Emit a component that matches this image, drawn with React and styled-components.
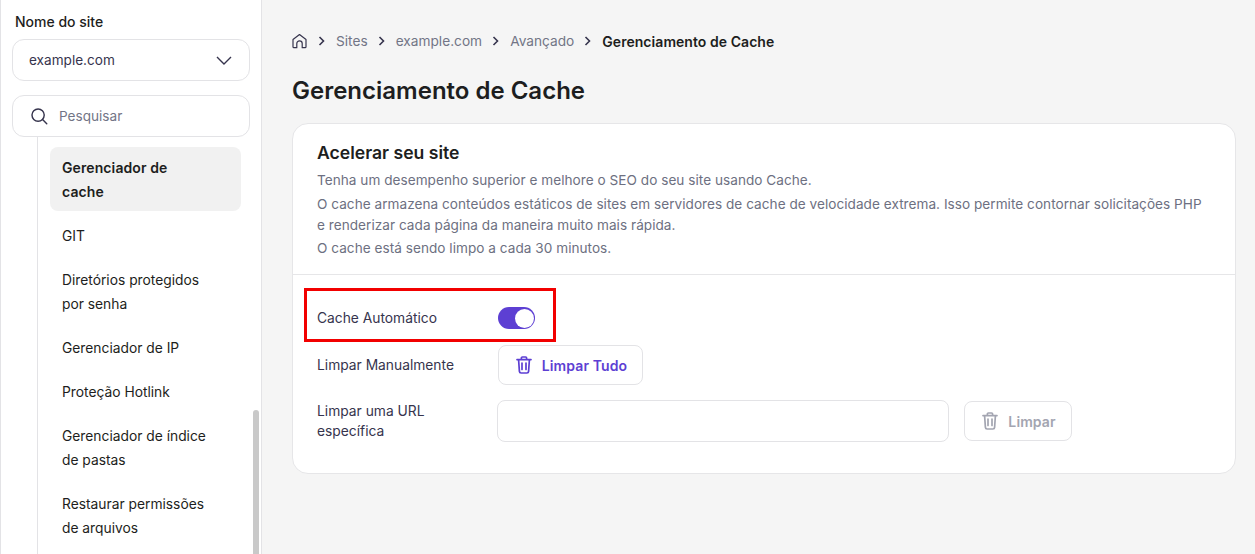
import React from "react";
import styled, { createGlobalStyle } from "styled-components";

const GlobalStyle = createGlobalStyle`
  html, body {
    margin: 0;
    height: 100%;
    background: #f5f5f5;
  }
  * {
    box-sizing: border-box;
  }
  body {
    font-family: "Inter", "Noto Sans", sans-serif;
    color: #1d1e20;
  }
`;

const Page = styled.div`
  display: flex;
  height: 100vh;
  overflow: hidden;
`;

const Sidebar = styled.aside`
  position: relative;
  flex: 0 0 262px;
  background: #fff;
  border-left: 1px solid #e3e3e6;
  border-right: 1px solid #e3e3e6;
  padding: 13px 11px 0 0;
  overflow: hidden;
`;

const SiteLabel = styled.div`
  font-size: 14px;
  line-height: 18px;
  font-weight: 500;
  margin: 0 0 8px 14px;
`;

const FieldBox = styled.div`
  display: flex;
  align-items: center;
  justify-content: space-between;
  height: 42px;
  margin-left: 11px;
  border: 1px solid #e3e3e6;
  border-radius: 12px;
  background: #fff;
  font-size: 13.6px;
  color: #36344d;
  padding: 0 17px 0 16px;
`;

const SearchBox = styled(FieldBox)`
  justify-content: flex-start;
  gap: 11px;
  margin-top: 14px;
  padding: 0 0 0 17px;
  color: #727586;
`;

const NavList = styled.ul`
  list-style: none;
  margin: 0 0 0 36px;
  padding: 10px 9px 40px 12px;
  border-left: 1px solid #e3e3e6;
  display: flex;
  flex-direction: column;
  gap: 4px;
`;

const NavItem = styled.li`
  padding: 9px 12px 7px;
  border-radius: 8px;
  font-size: ${(p) => (p.$active ? "14px" : "13.8px")};
  letter-spacing: ${(p) => (p.$active ? "0.1px" : "0")};
  line-height: 24px;
  color: #1d1e20;
  width: 191px;
  white-space: pre-line;
  font-weight: ${(p) => (p.$active ? 600 : 400)};
  background: ${(p) => (p.$active ? "#f1f1f1" : "transparent")};
`;

const ScrollThumb = styled.div`
  position: absolute;
  top: 410px;
  left: 252px;
  width: 6px;
  height: 160px;
  border-radius: 3px;
  background: #c9c9c9;
`;

const Main = styled.main`
  flex: 1;
  padding: 31px 19px 0 30px;
`;

const Breadcrumbs = styled.nav`
  display: flex;
  align-items: center;
  height: 20px;
  font-size: 13.6px;
  color: #727586;
`;

const Crumb = styled.span`
  color: ${(p) => (p.$current ? "#1d1e20" : "#727586")};
  font-weight: ${(p) => (p.$current ? 600 : 400)};
  font-size: ${(p) => (p.$current ? "14px" : "13.7px")};
  letter-spacing: ${(p) => (p.$current ? "0.05px" : "0")};
`;

const Separator = styled.svg`
  width: 8px;
  height: 10px;
  margin: 0 10px;
  fill: none;
  stroke: #36344d;
  stroke-width: 1.6;
`;

const PageTitle = styled.h1`
  font-size: 24px;
  line-height: 32px;
  font-weight: 600;
  margin: 24px 0 16px;
  color: #1d1e20;
`;

const Card = styled.section`
  background: #fff;
  border: 1px solid #e6e6e8;
  border-radius: 16px;
  height: 351px;
`;

const CardHeader = styled.header`
  padding: 17px 24px 14px;
  border-bottom: 1px solid #e6e6e8;
  height: 151px;
`;

const CardTitle = styled.h2`
  font-size: 17.6px;
  line-height: 24px;
  font-weight: 600;
  margin: 0 0 5px;
`;

const Paragraph = styled.p`
  margin: 0 0 2.6px;
  max-width: 890px;
  font-size: 13.6px;
  letter-spacing: 0.03px;
  line-height: 21px;
  color: #6d7081;
`;

const CardBody = styled.div`
  padding: 21px 24px 0;
  display: flex;
  flex-direction: column;
`;

const Row = styled.div`
  position: relative;
  display: flex;
  align-items: center;
  height: ${(p) => p.$height}px;
  margin-bottom: ${(p) => p.$after || 0}px;
`;

const RedHighlight = styled.div`
  position: absolute;
  left: -13px;
  top: -8px;
  width: 252px;
  height: 54px;
  border: 3px solid #f20000;
`;

const RowLabel = styled.div`
  flex: 0 0 181px;
  font-size: 13.8px;
  line-height: 20px;
  color: #36344d;
  padding-right: 40px;
`;

const Toggle = styled.div`
  width: 37px;
  height: 22px;
  border-radius: 11px;
  background: #5d3fd3;
  display: flex;
  align-items: center;
  justify-content: flex-end;
  padding-right: 1.5px;
`;

const ToggleKnob = styled.span`
  width: 19px;
  height: 19px;
  border-radius: 50%;
  background: #fff;
`;

const ActionButton = styled.button`
  display: flex;
  align-items: center;
  justify-content: center;
  gap: 8px;
  height: 40px;
  width: ${(p) => p.$width}px;
  margin-left: ${(p) => p.$offset || 0}px;
  padding: 0;
  background: #fff;
  border: 1px solid #e3e3e6;
  border-radius: 8px;
  font-family: inherit;
  font-size: 14px;
  letter-spacing: 0.1px;
  font-weight: 600;
  color: ${(p) => (p.$disabled ? "#a3a5b1" : "#5d3fd3")};
`;

const UrlInput = styled.input`
  width: 452px;
  height: 42px;
  margin-left: -1px;
  border: 1px solid #e3e3e6;
  border-radius: 8px;
  background: #fff;
`;

const HomeIcon = () => (
  <svg width="16" height="16" viewBox="0 0 16 16" fill="none" stroke="#36344d" strokeWidth="1.2" strokeLinejoin="round">
    <path d="M1 6.6 7.5 1.6l6.5 5v7.2a.9.9 0 0 1-.9.9H10.2V10.6a2.7 2.7 0 0 0-5.4 0v4.1H1.9a.9.9 0 0 1-.9-.9z" />
  </svg>
);

const Chevron = () => (
  <Separator viewBox="0 0 8 10">
    <path d="M1.5 1 5.5 5 1.5 9" />
  </Separator>
);

const TrashIcon = ({ color }) => (
  <svg width="20" height="20" viewBox="0 0 20 20" fill="none" stroke={color} strokeWidth="1.7" strokeLinecap="round" strokeLinejoin="round">
    <path d="M3 4.6h14M7.4 4.4V3a1 1 0 0 1 1-1h3.2a1 1 0 0 1 1 1v1.4" />
    <path d="M4.6 4.8 5.4 16.4A1.7 1.7 0 0 0 7.1 18h5.8a1.7 1.7 0 0 0 1.7-1.6l.8-11.6" />
    <path d="M8 8v6.4M12 8v6.4" />
  </svg>
);

const items = [
  { label: "Gerenciador de\ncache", active: true },
  { label: "GIT" },
  { label: "Diretórios protegidos\npor senha" },
  { label: "Gerenciador de IP" },
  { label: "Proteção Hotlink" },
  { label: "Gerenciador de índice\nde pastas" },
  { label: "Restaurar permissões\nde arquivos" },
];

const App = () => (
  <Page>
    <GlobalStyle />
    <Sidebar>
      <SiteLabel>Nome do site</SiteLabel>
      <FieldBox>
        example.com
        <svg width="16" height="9" viewBox="0 0 16 9" fill="none" stroke="#36344d" strokeWidth="1.4">
          <path d="M1 1l7 7 7-7" />
        </svg>
      </FieldBox>
      <SearchBox>
        <svg width="18" height="18" viewBox="0 0 20 20" fill="none" stroke="#36344d" strokeWidth="1.6" strokeLinecap="round">
          <circle cx="9" cy="9" r="6.8" />
          <path d="M14 14l4.6 4.6" />
        </svg>
        Pesquisar
      </SearchBox>
      <NavList>
        {items.map((item) => (
          <NavItem key={item.label} $active={item.active}>
            {item.label}
          </NavItem>
        ))}
      </NavList>
      <ScrollThumb />
    </Sidebar>
    <Main>
      <Breadcrumbs>
        <HomeIcon />
        <Chevron />
        <Crumb>Sites</Crumb>
        <Chevron />
        <Crumb>example.com</Crumb>
        <Chevron />
        <Crumb>Avançado</Crumb>
        <Chevron />
        <Crumb $current>Gerenciamento de Cache</Crumb>
      </Breadcrumbs>
      <PageTitle>Gerenciamento de Cache</PageTitle>
      <Card>
        <CardHeader>
          <CardTitle>Acelerar seu site</CardTitle>
          <Paragraph>Tenha um desempenho superior e melhore o SEO do seu site usando Cache.</Paragraph>
          <Paragraph>
            O cache armazena conteúdos estáticos de sites em servidores de cache de velocidade extrema. Isso permite
            contornar solicitações PHP e renderizar cada página da maneira muito mais rápida.
          </Paragraph>
          <Paragraph>O cache está sendo limpo a cada 30 minutos.</Paragraph>
        </CardHeader>
        <CardBody>
          <Row $height={44} $after={5}>
            <RedHighlight />
            <RowLabel>Cache Automático</RowLabel>
            <Toggle>
              <ToggleKnob />
            </Toggle>
          </Row>
          <Row $height={40} $after={15}>
            <RowLabel>Limpar Manualmente</RowLabel>
            <ActionButton $width={145}>
              <TrashIcon color="#5d3fd3" />
              Limpar Tudo
            </ActionButton>
          </Row>
          <Row $height={42}>
            <RowLabel>Limpar uma URL específica</RowLabel>
            <UrlInput />
            <ActionButton $width={108} $offset={15} $disabled>
              <TrashIcon color="#a3a5b1" />
              Limpar
            </ActionButton>
          </Row>
        </CardBody>
      </Card>
    </Main>
  </Page>
);

export default App;
